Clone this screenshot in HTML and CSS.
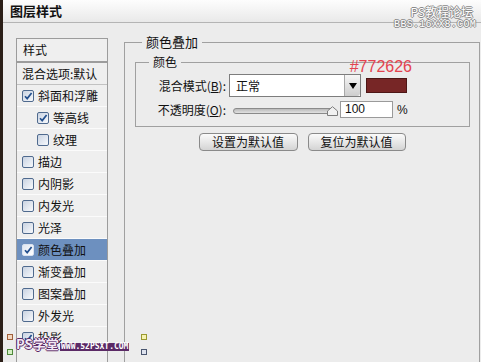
FILE: index.html
```html
<!DOCTYPE html>
<html lang="zh-CN">
<head>
   <meta charset="UTF-8">
   <meta name="viewport" content="width=device-width, initial-scale=1.0">
   <title>图层样式</title>
   <link rel="stylesheet" href="styles.css">
</head>
<body>

   <div class="dialog">
      <div class="titlebar">图层样式</div>

      <!-- forum watermark, top right -->
      <div class="mark-top">
         <div class="mark-top-name">PS教程论坛</div>
         <div class="mark-top-url">BBS.16XX8.COM</div>
      </div>

      <div class="main">
         <div class="styles">
            <div class="styles-head">样式</div>
            <ul class="styles-list">
               <li class="row row-first">混合选项:默认</li>
               <li class="row"><span class="cb on"><svg viewBox="0 0 10 10"><path d="M2 5.2 L4.2 7.6 L8.6 2" /></svg></span>斜面和浮雕</li>
               <li class="row row-sub"><span class="cb on"><svg viewBox="0 0 10 10"><path d="M2 5.2 L4.2 7.6 L8.6 2" /></svg></span>等高线</li>
               <li class="row row-sub"><span class="cb"></span>纹理</li>
               <li class="row"><span class="cb"></span>描边</li>
               <li class="row"><span class="cb"></span>内阴影</li>
               <li class="row"><span class="cb"></span>内发光</li>
               <li class="row"><span class="cb"></span>光泽</li>
               <li class="row row-active"><span class="cb on"><svg viewBox="0 0 10 10"><path d="M2 5.2 L4.2 7.6 L8.6 2" /></svg></span>颜色叠加</li>
               <li class="row"><span class="cb"></span>渐变叠加</li>
               <li class="row"><span class="cb"></span>图案叠加</li>
               <li class="row"><span class="cb"></span>外发光</li>
               <li class="row"><span class="cb on"><svg viewBox="0 0 10 10"><path d="M2 5.2 L4.2 7.6 L8.6 2" /></svg></span>投影</li>
            </ul>
         </div>

         <fieldset class="group">
            <legend>颜色叠加</legend>
            <fieldset class="sub-group">
               <legend>颜色</legend>
               <div class="field-row">
                  <span class="hex">#772626</span>
                  <label class="field-label">混合模式(<u>B</u>):</label>
                  <div class="dropdown">
                     <span class="dropdown-value">正常</span>
                     <span class="dropdown-btn"></span>
                  </div>
                  <span class="swatch"></span>
               </div>
               <div class="field-row field-row-small">
                  <label class="field-label">不透明度(<u>O</u>):</label>
                  <div class="slider">
                     <span class="track"></span>
                     <svg class="thumb" viewBox="0 0 11 10"><path d="M0.5 9.5 L0.5 5 L5.5 0.7 L10.5 5 L10.5 9.5 Z" /></svg>
                  </div>
                  <div class="num">100</div>
                  <span class="pct">%</span>
               </div>
            </fieldset>
            <div class="actions">
               <button class="btn">设置为默认值</button>
               <button class="btn btn-wide">复位为默认值</button>
            </div>
         </fieldset>
      </div>

      <!-- site watermark, bottom left -->
      <div class="mark-bottom">
         <span class="corner corner-tl"></span>
         <span class="corner corner-bl"></span>
         <span class="corner corner-tr"></span>
         <span class="corner corner-br"></span>
         <span class="mark-bottom-name">PS学堂</span>
         <span class="mark-bottom-url">WWW.52PSXT.COM</span>
      </div>
   </div>

</body>
</html>
```

FILE: styles.css
```css
body {
   margin: 0;
   padding: 0;
   font-family: "Noto Sans CJK SC", "Liberation Sans", sans-serif;
   font-size: 12px;
   color: #111;
}
.dialog {
   position: relative;
   width: 481px;
   height: 362px;
   box-sizing: border-box;
   border-left: 3px solid #2b1f18;
   background-color: #ececec;
   overflow: hidden;
}
.titlebar {
   height: 22px;
   line-height: 22px;
   padding-left: 7px;
   font-size: 13px;
   font-weight: bold;
   background: linear-gradient(#fdfdfd, #e9e9e9);
   border-bottom: 1px solid #b4b4b4;
}
.main {
   display: flex;
   align-items: stretch;
   height: 339px;
   box-sizing: border-box;
   padding: 11px 0 0 13px;
}

/* left list of layer styles */
.styles {
   display: flex;
   flex-direction: column;
   width: 92px;
   margin-top: 4px;
   flex: none;
}
.styles-head {
   height: 22px;
   line-height: 22px;
   padding-left: 6px;
   border: 1px solid #9c9c9c;
   background-color: #efefef;
}
.styles-list {
   flex: 1;
   margin: 0;
   padding: 0;
   list-style: none;
   border: 1px solid #9c9c9c;
   border-bottom: none;
   background-color: #efefef;
}
.row {
   display: flex;
   align-items: center;
   height: 21px;
   padding-left: 5px;
   border-bottom: 1px solid #fbfbfb;
   white-space: nowrap;
}
.row-first {
   border-bottom-color: #c2c2c2;
}
.row-sub {
   padding-left: 20px;
}
.row-active {
   background-color: #6d90bf;
}
.cb {
   width: 10px;
   height: 10px;
   margin-right: 4px;
   border: 1px solid #4f6a8e;
   border-radius: 2px;
   background: linear-gradient(135deg, #c9d3e2, #f7f9fc);
   flex: none;
}
.cb svg {
   display: block;
   width: 10px;
   height: 10px;
}
.cb path {
   fill: none;
   stroke: #24508e;
   stroke-width: 1.7;
}
.row-active .cb {
   border-color: #d8e2f0;
   background: linear-gradient(135deg, #dfe7f2, #ffffff);
}

/* right option panel */
.group {
   width: 356px;
   min-width: 0;
   box-sizing: border-box;
   margin: 0 0 0 16px;
   padding: 4px 0 0 0;
   border: 1px solid #a0a0a0;
   border-bottom: none;
}
.group > legend {
   margin-left: 17px;
   padding: 0 4px;
   font-size: 13px;
   line-height: 16px;
}
.sub-group {
   min-width: 0;
   margin: 0 9px 0 10px;
   padding: 4px 0 8px 0;
   border: 1px solid #a0a0a0;
}
.sub-group > legend {
   margin-left: 13px;
   padding: 0 4px;
   font-size: 12px;
   line-height: 16px;
}
.field-row {
   position: relative;
   display: flex;
   align-items: center;
   height: 23px;
}
.field-row-small {
   height: 17px;
   margin-top: 4px;
}
.field-label {
   width: 90px;
   text-align: right;
   white-space: nowrap;
}
.hex {
   position: absolute;
   right: 57px;
   top: -15px;
   font-family: "Liberation Sans", sans-serif;
   font-size: 16px;
   line-height: 16px;
   color: #e4434f;
}
.dropdown {
   display: flex;
   width: 132px;
   height: 23px;
   box-sizing: border-box;
   margin-left: 3px;
   border: 1px solid #7d7d7d;
   background-color: #fff;
}
.dropdown-value {
   flex: 1;
   padding-left: 6px;
   line-height: 21px;
}
.dropdown-btn {
   position: relative;
   width: 15px;
   border-left: 1px solid #a8a8a8;
   border-radius: 0 0 3px 0;
   background: linear-gradient(#f6f6f6, #cdcdcd);
}
.dropdown-btn::after {
   content: "";
   position: absolute;
   left: 4px;
   top: 8px;
   border-left: 4px solid transparent;
   border-right: 4px solid transparent;
   border-top: 6px solid #000;
}
.swatch {
   width: 39px;
   height: 13px;
   margin-left: 5px;
   border: 1px solid #4d1616;
   background-color: #772626;
}
.slider {
   position: relative;
   width: 105px;
   height: 17px;
   margin-left: 7px;
}
.track {
   position: absolute;
   left: 0;
   top: 7px;
   width: 98px;
   height: 4px;
   border: 1px solid #8a8a8a;
   border-radius: 3px;
   background: linear-gradient(#b9b9b9, #e2e2e2);
}
.thumb {
   position: absolute;
   left: 94px;
   top: 5px;
   width: 11px;
   height: 10px;
}
.thumb path {
   fill: #f1f1f1;
   stroke: #7c7c7c;
   stroke-width: 1;
}
.num {
   width: 53px;
   height: 17px;
   box-sizing: border-box;
   margin-left: 2px;
   padding-left: 4px;
   line-height: 15px;
   border: 1px solid #9a9a9a;
   background-color: #fff;
   font-family: "Liberation Sans", sans-serif;
}
.pct {
   margin-left: 4px;
   font-family: "Liberation Sans", sans-serif;
}
.actions {
   display: flex;
   justify-content: center;
   gap: 10px;
   margin-top: 6px;
}
.btn {
   width: 99px;
   height: 18px;
   padding: 0;
   border: 1px solid #8a8a8a;
   border-radius: 4px;
   background: linear-gradient(#fbfbfb, #d4d4d4);
   font-family: "Noto Sans CJK SC", sans-serif;
   font-size: 12px;
   line-height: 16px;
   color: #111;
}
.btn-wide {
   width: 98px;
}

/* watermarks laid over the screenshot */
.mark-top {
   position: absolute;
   right: 5px;
   top: 4px;
   text-align: right;
   color: #fff;
   text-shadow: 1px 0 #8a8a8a, -1px 0 #8a8a8a, 0 1px #8a8a8a, 0 -1px #8a8a8a;
}
.mark-top-name {
   padding-right: 3px;
   font-size: 12px;
   line-height: 15px;
}
.mark-top-url {
   font-family: "Liberation Mono", monospace;
   font-size: 10px;
   line-height: 12px;
   letter-spacing: 0.3px;
}
.mark-bottom {
   position: absolute;
   left: 4px;
   top: 334px;
   width: 143px;
   height: 22px;
}
.mark-bottom-name {
   position: absolute;
   left: 9px;
   top: 2px;
   font-size: 13px;
   line-height: 16px;
   font-weight: bold;
   color: #f4eaf6;
   text-shadow: 1px 0 #5b2a66, -1px 0 #5b2a66, 0 1px #5b2a66, 0 -1px #5b2a66;
}
.mark-bottom-url {
   position: absolute;
   left: 53px;
   top: 9px;
   padding: 0 1px;
   font-family: "DejaVu Sans Mono", monospace;
   font-size: 8px;
   line-height: 8px;
   font-weight: bold;
   color: #fff;
   background-color: #5b2a66;
}
.corner {
   position: absolute;
   width: 4px;
   height: 4px;
   border: 1px solid;
}
.corner-tl {
   left: 0;
   top: 0;
   border-color: #a0603a;
   background-color: #f3d7c0;
}
.corner-bl {
   left: 0;
   top: 15px;
   border-color: #4f8a3a;
   background-color: #d5f0c5;
}
.corner-tr {
   left: 134px;
   top: 0;
   border-color: #9a9a30;
   background-color: #f6f2b0;
}
.corner-br {
   left: 134px;
   top: 15px;
   border-color: #4a5670;
   background-color: #dde2ee;
}
```
